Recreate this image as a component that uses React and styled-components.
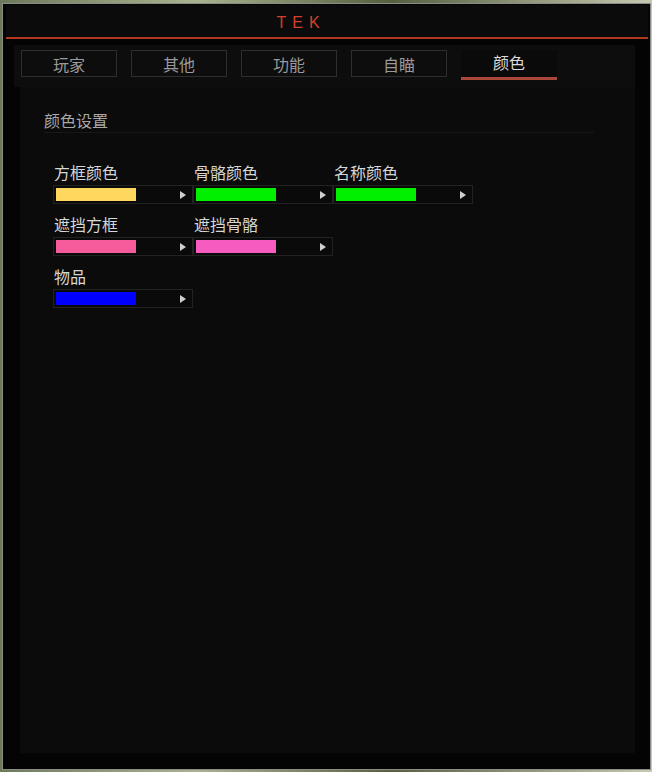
import React from 'react';
import styled, { createGlobalStyle } from 'styled-components';

const GlobalStyle = createGlobalStyle`
  html, body {
    margin: 0;
    padding: 0;
    height: 100%;
  }
  body {
    background: linear-gradient(90deg, #6d7a5a 0%, #a9b38f 30%, #56603f 60%, #c5c9b0 100%);
    font-family: "Noto Sans CJK SC", "Noto Sans", sans-serif;
    overflow: hidden;
  }
  #root {
    height: 100%;
  }
`;

const Window = styled.div`
  box-sizing: border-box;
  margin: 3px 1px 2px 2px;
  height: calc(100% - 5px);
  border: 1px solid #8c8c86;
  background: #040404;
  display: flex;
  flex-direction: column;
`;

const TitleBar = styled.div`
  margin: 1px 2px 0 3px;
  height: 29px;
  background: #0b0b0b;
  display: flex;
  align-items: center;
  justify-content: center;
  padding: 3px 58px 0 0;
  border-bottom: 2px solid #b3361f;
`;

const Title = styled.span`
  font-family: "Liberation Sans", sans-serif;
  font-size: 16px;
  letter-spacing: 6px;
  color: #d4402a;
  padding-left: 6px;
`;

const Body = styled.div`
  flex: 1;
  display: flex;
  flex-direction: column;
  padding: 6px 15px 16px 11px;
`;

const TabBar = styled.div`
  display: flex;
  gap: 14px;
  padding: 5px 0 7px 7px;
  background: #0d0d0d;
`;

const Tab = styled.div`
  box-sizing: border-box;
  width: 96px;
  height: ${({ active }) => (active ? '30px' : '27px')};
  display: flex;
  align-items: center;
  justify-content: center;
  padding-bottom: ${({ active }) => (active ? '3px' : '0')};
  font-size: 16px;
  color: ${({ active }) => (active ? '#dcdcdc' : '#9a9a9a')};
  border: ${({ active }) => (active ? 'none' : '1px solid #2e2e2e')};
  border-bottom: ${({ active }) => (active ? '3px solid #a8473a' : '1px solid #2e2e2e')};
  background: ${({ active }) => (active ? '#0a0a0a' : 'transparent')};
`;

const Panel = styled.div`
  flex: 1;
  margin: 0 0 0 6px;
  background: #0b0b0b;
  padding: 22px 41px 0 24px;
`;

const SectionTitle = styled.div`
  font-size: 16px;
  line-height: 22px;
  color: #a8a8a8;
  padding-bottom: 1px;
  border-bottom: 1px solid #181818;
  margin-bottom: 30px;
`;

const Grid = styled.div`
  display: grid;
  grid-template-columns: repeat(3, 140px);
  row-gap: 11px;
  padding-left: 9px;
`;

const Field = styled.div`
  display: flex;
  flex-direction: column;
`;

const Label = styled.div`
  font-size: 16px;
  line-height: 22px;
  color: #d6d6d6;
  padding-left: 1px;
  margin-top: -2px;
  margin-bottom: 2px;
`;

const Picker = styled.div`
  box-sizing: border-box;
  width: 140px;
  height: 19px;
  border: 1px solid #222;
  background: #0a0a0a;
  display: flex;
  align-items: center;
  justify-content: space-between;
  padding: 0 6px 0 2px;
`;

const Swatch = styled.div`
  width: 80px;
  height: 13px;
  background: ${({ color }) => color};
`;

const Arrow = styled.span`
  width: 0;
  height: 0;
  border-top: 4px solid transparent;
  border-bottom: 4px solid transparent;
  border-left: 6px solid #cfcfcf;
`;

const tabs = ['玩家', '其他', '功能', '自瞄', '颜色'];

const rows = [
  [
    { label: '方框颜色', color: '#ffd75e' },
    { label: '骨骼颜色', color: '#00f000' },
    { label: '名称颜色', color: '#00f000' },
  ],
  [
    { label: '遮挡方框', color: '#f65b9b' },
    { label: '遮挡骨骼', color: '#f65bc0' },
  ],
  [{ label: '物品', color: '#0000ff' }],
];

const ColorField = ({ label, color }) => (
  <Field>
    <Label>{label}</Label>
    <Picker>
      <Swatch color={color} />
      <Arrow />
    </Picker>
  </Field>
);

const App = () => (
  <>
    <GlobalStyle />
    <Window>
      <TitleBar>
        <Title>TEK</Title>
      </TitleBar>
      <Body>
        <TabBar>
          {tabs.map((t) => (
            <Tab key={t} active={t === '颜色'}>
              {t}
            </Tab>
          ))}
        </TabBar>
        <Panel>
          <SectionTitle>颜色设置</SectionTitle>
          <Grid>
            {rows.map((row, i) => (
              <React.Fragment key={i}>
                {row.map((f) => (
                  <ColorField key={f.label} {...f} />
                ))}
                {Array.from({ length: 3 - row.length }).map((_, k) => (
                  <div key={`e${k}`} />
                ))}
              </React.Fragment>
            ))}
          </Grid>
        </Panel>
      </Body>
    </Window>
  </>
);

export default App;
